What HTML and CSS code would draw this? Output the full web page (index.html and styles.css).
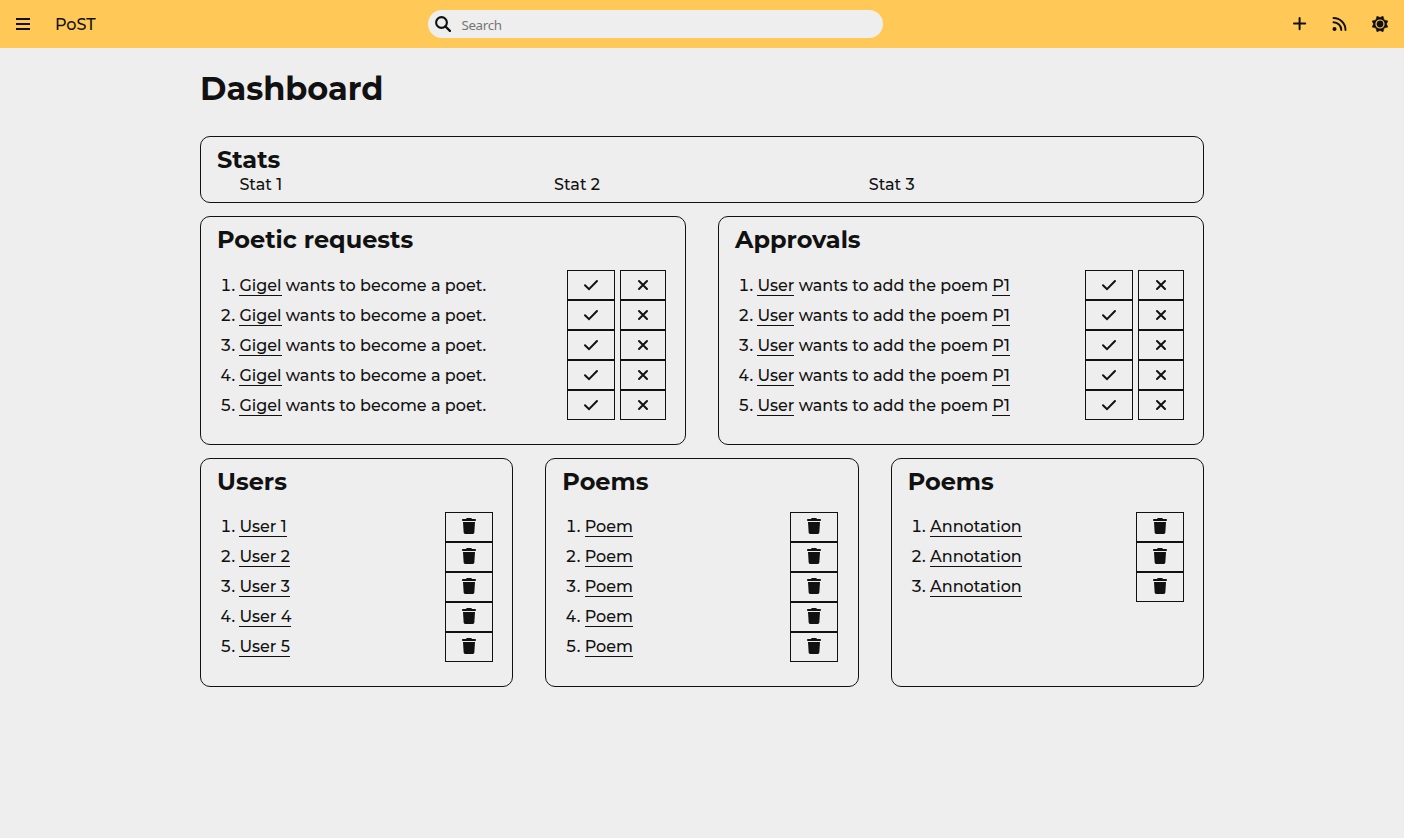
FILE: index.html
```html
<!DOCTYPE html>
<html lang="en">
<head>
<meta charset="utf-8">
<title>PoST</title>
<link rel="stylesheet" href="styles.css">
</head>
<body>
<svg class="sprite" aria-hidden="true">
  <symbol id="check" viewBox="0 0 16 16"><path d="M2 8.2 6 12.2 14 4" fill="none" stroke="currentColor" stroke-width="2" stroke-linecap="round" stroke-linejoin="miter"/></symbol>
  <symbol id="cross" viewBox="0 0 16 16"><path d="m4 4 8 8M12 4l-8 8" fill="none" stroke="currentColor" stroke-width="2" stroke-linecap="round"/></symbol>
  <symbol id="trash" viewBox="0 0 448 512"><path d="M135.2 17.7C140.6 6.800 151.700 0 163.800 0H284.200c12.100 0 23.200 6.800 28.600 17.700L320 32h96c17.700 0 32 14.300 32 32s-14.300 32-32 32H32C14.300 96 0 81.700 0 64s14.300-32 32-32h96zM32 128H416L394.800 467c-1.600 25.300-22.600 45-47.900 45H101.100c-25.300 0-46.300-19.700-47.900-45z" fill="currentColor"/></symbol>
</svg>
<header class="topbar">
  <div class="brand">
    <svg class="icon" viewBox="0 0 16 16"><path d="M1 3h14M1 8h14M1 13h14" stroke="currentColor" stroke-width="2"/></svg>
    <span class="brand-name">PoST</span>
  </div>
  <label class="search">
    <svg class="icon" viewBox="0 0 16 16"><circle cx="6.500" cy="6.500" r="5.400" fill="none" stroke="currentColor" stroke-width="2.100"/><path d="m10.500 10.500 4.400 4.400" stroke="currentColor" stroke-width="2.300" stroke-linecap="round"/></svg>
    <input class="search-input" type="text" placeholder="Search">
  </label>
  <nav class="actions">
    <svg class="icon" viewBox="0 0 16 16"><path d="M7.600 2v11.200M2 7.600h11.200" stroke="currentColor" stroke-width="2" stroke-linecap="round"/></svg>
    <svg class="icon" viewBox="0 0 16 16"><circle cx="2.500" cy="13" r="2" fill="currentColor"/><path d="M1.500 2a12 12 0 0 1 12 12M1.500 6.200a7.800 7.800 0 0 1 7.800 7.800" fill="none" stroke="currentColor" stroke-width="1.900" stroke-linecap="round"/></svg>
    <svg class="icon" viewBox="0 0 16 16"><path d="m5 .2 3 1.400 3-1.400 1 3.800 3.800 1L14.400 8l1.400 3-3.800 1-1 3.800-3-1.400-3 1.400L4 12l-3.800-1L1.600 8 .2 5 4 4z" fill="currentColor" stroke="currentColor" stroke-width=".6"/><circle cx="8" cy="8" r="4" fill="none" stroke="#ffc857" stroke-width="1.200"/></svg>
  </nav>
</header>
<main class="dashboard">
  <h1 class="page-title">Dashboard</h1>
  <section class="card stats">
    <h2 class="card-title">Stats</h2>
    <div class="stat-list"><span>Stat 1</span><span>Stat 2</span><span>Stat 3</span></div>
  </section>
  <div class="row row-two" id="moderation"></div>
  <div class="row row-three" id="content"></div>
</main>
<script src="app.js"></script>
</body>
</html>
```
FILE: styles.css
```css
* { box-sizing: border-box; }
body {
  margin: 0;
  background: #eee;
  color: #111;
  font: 500 16px/20px Montserrat, sans-serif;
}
.sprite { display: none; }
.icon { display: block; width: 16px; height: 16px; flex: none; }
.topbar {
  display: grid;
  grid-template-columns: 428px 455px 1fr;
  align-items: center;
  height: 48px;
  background: #ffc857;
}
.brand { display: flex; align-items: center; gap: 24px; padding-left: 15px; }
.brand-name { padding-top: 2px; }
.search {
  display: flex;
  align-items: center;
  gap: 10px;
  height: 28px;
  padding-left: 7.400px;
  border-radius: 14px;
  background: #eee;
}
.search-input {
  flex: 1;
  padding: 2px 0 0;
  border: 0;
  outline: 0;
  background: none;
  font: 13.333px "Noto Sans", sans-serif;
  letter-spacing: -.3px;
}
.search-input::placeholder { color: #757575; }
.actions { display: flex; justify-content: flex-end; gap: 24px; padding-right: 16px; }
.dashboard { width: 1004px; margin: 0 auto; }
.page-title {
  margin: 0;
  padding-top: 21px;
  height: 88px;
  font-size: 32px;
  font-weight: 700;
  line-height: 40px;
}
.card { border: 1px solid #111; border-radius: 10px; padding: 8px 16px 0; }
.card-title { margin: 0; font-size: 24px; font-weight: 700; line-height: 29px; }
.stats { height: 67px; }
.stat-list {
  display: grid;
  grid-template-columns: repeat(3, 314.700px);
  padding: 1px 0 0 22.400px;
}
.row { display: grid; gap: 32px; margin-top: 13px; }
.row .card { height: 229px; padding-right: 19.300px; }
.row-two { grid-template-columns: repeat(2, 1fr); }
.row-three { grid-template-columns: repeat(3, 1fr); }
.entries { margin: 16px 0 0; padding: 0 0 0 22.400px; }
.entry { height: 30px; line-height: 30px; }
.row-two .entry { line-height: 32px; }
.entry-body { display: inline-flex; width: 100%; height: 30px; align-items: center; vertical-align: top; line-height: 18px; }
.entry-text { flex: 1; }
.row-two .entry-text { padding-top: 2px; }
.entry a { display: inline-block; border-bottom: 1px solid #111; color: inherit; text-decoration: none; }
.buttons { display: flex; gap: 5px; }
.button {
  display: flex;
  align-items: center;
  justify-content: center;
  width: 48px;
  height: 30px;
  padding: 0;
  border: 1px solid #111;
  background: none;
  color: #111;
}
.button-cross { width: 46px; }
.button-trash .icon { width: 14px; margin-bottom: 2px; }
```
FILE: app.js
```js
const poet = '<a>Gigel</a> wants to become a poet.';
const approval = '<a>User</a> wants to add the poem <a>P1</a>';
const icon = name => `<button class="button button-${name}"><svg class="icon"><use href="#${name}"/></svg></button>`;

function card(title, items, icons) {
  const rows = items.map(text => `<li class="entry"><div class="entry-body">
    <span class="entry-text">${text}</span>
    <span class="buttons">${icons.map(icon).join('')}</span></div></li>`).join('');
  return `<section class="card"><h2 class="card-title">${title}</h2><ol class="entries">${rows}</ol></section>`;
}

document.getElementById('moderation').innerHTML =
  card('Poetic requests', Array(5).fill(poet), ['check', 'cross']) +
  card('Approvals', Array(5).fill(approval), ['check', 'cross']);
document.getElementById('content').innerHTML =
  card('Users', [1, 2, 3, 4, 5].map(n => `<a>User ${n}</a>`), ['trash']) +
  card('Poems', Array(5).fill('<a>Poem</a>'), ['trash']) +
  card('Poems', Array(3).fill('<a>Annotation</a>'), ['trash']);
```
